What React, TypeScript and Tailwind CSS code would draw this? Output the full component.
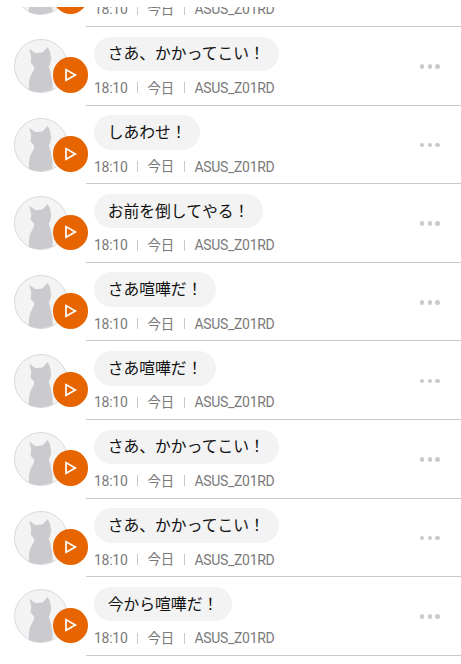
import React from 'react'

const messages = [
  'さあ、かかってこい！',
  'さあ、かかってこい！',
  'しあわせ！',
  'お前を倒してやる！',
  'さあ喧嘩だ！',
  'さあ喧嘩だ！',
  'さあ、かかってこい！',
  'さあ、かかってこい！',
  '今から喧嘩だ！',
]

// Avatar: cat silhouette with the play button over its corner
function Avatar() {
  return (
    <div className="relative ml-[14.4px] mt-[12.2px] h-[54px] w-[79.6px] shrink-0">
      <svg className="h-[54px] w-[54px]" viewBox="0 0 54 54">
        <circle cx="27" cy="27" r="26.5" fill="#f4f4f5" stroke="#d9d9db" />
        <path
          d="M15.3 9.8 L21.5 14.2 L28.5 13.6 L33.7 8 L36 12.5 L37.2 19.5 L36.4 24 L34.8 28 L36.5 33 L38.6 44 V50.6 Q27.5 55.5 15 51.2 C14.6 46 15 41 16.4 37.5 L20.2 30 L19.8 27.2 L16.5 23.6 L17.3 18 Z"
          fill="#cbcbcf"
        />
      </svg>
      <button className="absolute left-[38.2px] top-[18.2px] flex size-[35.6px] items-center justify-center rounded-full bg-[#e66500]">
        <svg className="size-[18px]" viewBox="0 0 18 18" fill="none" stroke="#fff" strokeWidth="1.7">
          <path d="M5 3.6 V14.2 L14.3 8.9Z" />
        </svg>
      </button>
    </div>
  )
}

function MessageRow({ text }: { text: string }) {
  return (
    <li className="flex h-[78.6px] bg-white">
      <Avatar />
      <div className="-ml-[8px] flex grow border-b-[1.5px] border-[#c9c9c9] pl-[8px]">
        <div className="grow pt-[9.6px]">
          <p className="flex h-[34.6px] w-fit items-center rounded-full bg-[#f3f3f3] px-[13.7px] pt-px text-[15.8px] leading-none text-[#111]">
            {text}
          </p>
          <div className="mt-[7.8px] flex h-[18px] items-center text-[14px] leading-none text-[#7a7a7a]">
            <span className="w-[43px] tracking-[-0.25px]">18:10</span>
            <span className="h-[11px] w-px bg-[#c8c8c8]" />
            <span className="ml-[9.5px] w-[36.4px] pt-px text-[13.4px]">今日</span>
            <span className="h-[11px] w-px bg-[#c8c8c8]" />
            <span className="ml-[9.5px] tracking-[-0.3px]">ASUS_Z01RD</span>
          </div>
        </div>
        <button className="mr-[21px] flex h-[79px] items-center gap-[3.2px]">
          <span className="size-[4.6px] rounded-full bg-[#cacaca]" />
          <span className="size-[4.6px] rounded-full bg-[#cacaca]" />
          <span className="size-[4.6px] rounded-full bg-[#cacaca]" />
        </button>
      </div>
    </li>
  )
}

export default function App() {
  return (
    <main className="h-[664px] w-[461px] overflow-hidden bg-white pt-[7px] font-[Roboto,'Noto_Sans_CJK_JP',sans-serif]">
      <div className="h-[657px] overflow-hidden">
        <ul className="-mt-[58.6px]">
          {messages.map((text, i) => (
            <MessageRow key={i} text={text} />
          ))}
        </ul>
      </div>
    </main>
  )
}
